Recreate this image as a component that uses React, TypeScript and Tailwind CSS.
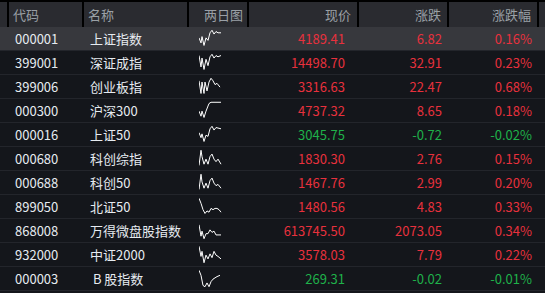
import React from "react";

type Row = {
  code: string;
  name: string;
  price: string;
  chg: string;
  pct: string;
  up: boolean;
  spark: string;
};

const rows: Row[] = [
  { code: "000001", name: "上证指数", price: "4189.41", chg: "6.82", pct: "0.16%", up: true, spark: "0,8 2,12 3,7 5,14 7,8 9,10 11,4 13,2 15,5 17,3 19,4 22,4" },
  { code: "399001", name: "深证成指", price: "14498.70", chg: "32.91", pct: "0.23%", up: true, spark: "0,3 2,12 3,5 5,14 7,6 9,11 11,4 13,2 15,5 17,3 19,4 22,3" },
  { code: "399006", name: "创业板指", price: "3316.63", chg: "22.47", pct: "0.68%", up: true, spark: "0,4 2,14 3,5 5,14 6,5 8,12 10,5 12,2 14,4 16,7 18,6 21,9" },
  { code: "000300", name: "沪深300", price: "4737.32", chg: "8.65", pct: "0.18%", up: true, spark: "0,9 2,13 3,9 5,14 7,9 10,3 12,2 15,2 22,2" },
  { code: "000016", name: "上证50", price: "3045.75", chg: "-0.72", pct: "-0.02%", up: false, spark: "0,7 2,11 3,8 5,14 7,9 9,10 11,4 13,2 15,5 17,3 22,4" },
  { code: "000680", name: "科创综指", price: "1830.30", chg: "2.76", pct: "0.15%", up: true, spark: "0,14 2,2 3,7 5,13 7,9 9,13 11,7 13,5 15,9 17,11 19,9 22,13" },
  { code: "000688", name: "科创50", price: "1467.76", chg: "2.99", pct: "0.20%", up: true, spark: "0,14 2,2 3,8 5,13 7,9 9,13 11,7 13,5 15,9 17,11 19,10 22,13" },
  { code: "899050", name: "北证50", price: "1480.56", chg: "4.83", pct: "0.33%", up: true, spark: "0,2 2,6 4,11 6,14 8,12 10,13 12,10 14,11 16,10 18,10 20,11 22,13" },
  { code: "868008", name: "万得微盘股指数", price: "613745.50", chg: "2073.05", pct: "0.34%", up: true, spark: "0,4 2,13 3,9 5,15 7,11 9,11 11,8 13,10 15,9 17,12 19,12 22,12" },
  { code: "932000", name: "中证2000", price: "3578.03", chg: "7.79", pct: "0.22%", up: true, spark: "0,2 2,10 3,6 5,15 7,9 9,12 11,8 13,11 15,6 17,9 19,10 22,12" },
  { code: "000003", name: " B 股指数", price: "269.31", chg: "-0.02", pct: "-0.01%", up: false, spark: "0,2 2,6 4,14 6,15 8,12 10,15 12,11 14,9 16,8 18,7 21,6" },
];

const cols = "grid grid-cols-[9px_75px_105px_60px_110px_90px_90px_6px]";
const font = { fontFamily: '"Noto Sans CJK SC", "Noto Sans", sans-serif' };

export default function App() {
  return (
    <div className="w-[545px] h-[293px] overflow-hidden bg-[#14161b] text-[13px] leading-none" style={font}>
      <div className="h-[2px] bg-black" />
      <div className={`${cols} h-[25px] bg-[#2a2b30] text-[#9aa0a6]`}>
        <div className="border-r-2 border-black" />
        <div className="border-r-2 border-black flex items-center pl-[4px]">代码</div>
        <div className="border-r-2 border-black flex items-center pl-[4px]">名称</div>
        <div className="border-r-2 border-black flex items-center justify-end pr-[4px]">两日图</div>
        <div className="border-r-2 border-black flex items-center justify-end pr-[6px]">现价</div>
        <div className="border-r-2 border-black flex items-center justify-end pr-[6px]">涨跌</div>
        <div className="border-r-2 border-black flex items-center justify-end pr-[6px]">涨跌幅</div>
        <div />
      </div>
      {rows.map((r, i) => {
        const color = r.up ? "text-[#e8313d]" : "text-[#1fb14a]";
        return (
          <div
            key={r.code}
            className={`${cols} h-[24px] border-b border-[#23252b] ${i === 0 ? "bg-[#37383d]" : "bg-[#14161b]"}`}
          >
            <div />
            <div className="flex items-center pl-[6px] text-[#e6ebf0]">{r.code}</div>
            <div className="flex items-center pl-[6px] text-[#e6ebf0] whitespace-pre">{r.name}</div>
            <div className="flex items-center pl-[10px]">
              <svg width="24" height="19" viewBox="0 1 24 15" preserveAspectRatio="none">
                <polyline
                  points={r.spark}
                  fill="none"
                  stroke="#ffffff"
                  strokeWidth="1"
                  vectorEffect="non-scaling-stroke"
                />
              </svg>
            </div>
            <div className={`flex items-center justify-end pr-[14px] ${color}`}>{r.price}</div>
            <div className={`flex items-center justify-end pr-[7px] ${color}`}>{r.chg}</div>
            <div className={`flex items-center justify-end pr-[7px] ${color}`}>{r.pct}</div>
            <div />
          </div>
        );
      })}
    </div>
  );
}
